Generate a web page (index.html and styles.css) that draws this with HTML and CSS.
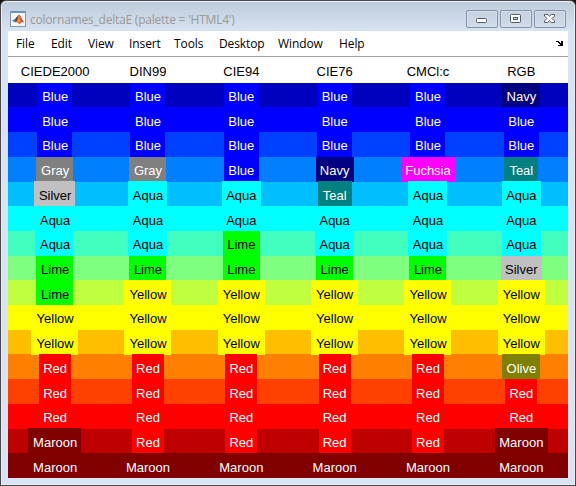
FILE: index.html
```html
<!DOCTYPE html>
<html lang="en">
<head>
<meta charset="utf-8">
<title>colornames_deltaE</title>
<link rel="stylesheet" href="styles.css">
</head>
<body>
<div class="window">
  <header class="titlebar">
    <svg class="app-icon" width="16" height="16" viewBox="0 0 16 16">
      <rect x=".5" y=".5" width="15" height="15" fill="#f4f5f7" stroke="#8295aa"/>
      <rect x="1" y="0" width="14" height="2" fill="#6c93bd"/>
      <path d="M2 9.500 5 8 7 10 5 11.500z" fill="#397fae"/>
      <path d="M5 8 9 3.500 7.500 9.500 6 11z" fill="#653f4c"/>
      <path d="M9 3.500C10.500 4 12 9 14 11.500L12 11 9 13.500 8 11.500 6 11.500C7.500 9 8 6 9 3.500z" fill="#e6602b"/>
      <path d="M9.200 5 9.800 10 8.500 12 7.500 10z" fill="#f6a03b"/>
      <path d="M10 4.500C11 6.500 12 10 14 11.500L12 10.700z" fill="#9d2b20"/>
    </svg>
    <span class="title">colornames_deltaE (palette = 'HTML4')</span>
    <div class="controls">
      <span class="control"><svg width="30" height="16" viewBox="0 0 30 16"><rect x="9.500" y="7.500" width="10" height="4" rx="1" fill="#fff" stroke="#555b6b"/></svg></span>
      <span class="control"><svg width="30" height="16" viewBox="0 0 30 16"><rect x="9.500" y="3.500" width="10" height="8" rx="1" fill="#fff" stroke="#555b6b"/><rect x="12.500" y="6.500" width="4" height="2" fill="#c9d5e4" stroke="#555b6b"/></svg></span>
      <span class="control"><svg width="30" height="16" viewBox="0 0 30 16"><path d="M9.500 3.500H12.800L14.500 5.400 16.200 3.500H19.500V5L17 7.500 19.500 10V11.500H16.200L14.500 9.600 12.800 11.500H9.500V10L12 7.500 9.500 5z" fill="#fff" stroke="#555b6b"/></svg></span>
    </div>
  </header>
  <main class="client">
    <nav class="menu">
      <span>File</span><span>Edit</span><span>View</span><span>Insert</span><span>Tools</span><span>Desktop</span><span>Window</span><span>Help</span>
      <svg class="dock" width="7" height="5" viewBox="0 0 7 5" shape-rendering="crispEdges"><path d="M0 1V0H3V1H4V2H5V0H7V5H2V4H4V3H3V2H2V1z"/></svg>
    </nav>
    <div class="row heads"><span>CIEDE2000</span><span>DIN99</span><span>CIE94</span><span>CIE76</span><span>CMCl:c</span><span>RGB</span></div>
    <section class="chart">
      <div class="row"><b class="blue">Blue</b><b class="blue">Blue</b><b class="blue">Blue</b><b class="blue">Blue</b><b class="blue">Blue</b><b class="navy">Navy</b></div>
      <div class="row"><b class="blue">Blue</b><b class="blue">Blue</b><b class="blue">Blue</b><b class="blue">Blue</b><b class="blue">Blue</b><b class="blue">Blue</b></div>
      <div class="row"><b class="blue">Blue</b><b class="blue">Blue</b><b class="blue">Blue</b><b class="blue">Blue</b><b class="blue">Blue</b><b class="blue">Blue</b></div>
      <div class="row"><b class="gray">Gray</b><b class="gray">Gray</b><b class="blue">Blue</b><b class="navy">Navy</b><b class="fuchsia">Fuchsia</b><b class="teal">Teal</b></div>
      <div class="row"><b class="silver">Silver</b><b class="aqua">Aqua</b><b class="aqua">Aqua</b><b class="teal">Teal</b><b class="aqua">Aqua</b><b class="aqua">Aqua</b></div>
      <div class="row"><b class="aqua">Aqua</b><b class="aqua">Aqua</b><b class="aqua">Aqua</b><b class="aqua">Aqua</b><b class="aqua">Aqua</b><b class="aqua">Aqua</b></div>
      <div class="row"><b class="aqua">Aqua</b><b class="aqua">Aqua</b><b class="lime">Lime</b><b class="aqua">Aqua</b><b class="aqua">Aqua</b><b class="aqua">Aqua</b></div>
      <div class="row"><b class="lime">Lime</b><b class="lime">Lime</b><b class="lime">Lime</b><b class="lime">Lime</b><b class="lime">Lime</b><b class="silver">Silver</b></div>
      <div class="row"><b class="lime">Lime</b><b class="yellow">Yellow</b><b class="yellow">Yellow</b><b class="yellow">Yellow</b><b class="yellow">Yellow</b><b class="yellow">Yellow</b></div>
      <div class="row"><b class="yellow">Yellow</b><b class="yellow">Yellow</b><b class="yellow">Yellow</b><b class="yellow">Yellow</b><b class="yellow">Yellow</b><b class="yellow">Yellow</b></div>
      <div class="row"><b class="yellow">Yellow</b><b class="yellow">Yellow</b><b class="yellow">Yellow</b><b class="yellow">Yellow</b><b class="yellow">Yellow</b><b class="yellow">Yellow</b></div>
      <div class="row"><b class="red">Red</b><b class="red">Red</b><b class="red">Red</b><b class="red">Red</b><b class="red">Red</b><b class="olive">Olive</b></div>
      <div class="row"><b class="red">Red</b><b class="red">Red</b><b class="red">Red</b><b class="red">Red</b><b class="red">Red</b><b class="red">Red</b></div>
      <div class="row"><b class="red">Red</b><b class="red">Red</b><b class="red">Red</b><b class="red">Red</b><b class="red">Red</b><b class="red">Red</b></div>
      <div class="row"><b class="maroon">Maroon</b><b class="red">Red</b><b class="red">Red</b><b class="red">Red</b><b class="red">Red</b><b class="maroon">Maroon</b></div>
      <div class="row"><b class="maroon">Maroon</b><b class="maroon">Maroon</b><b class="maroon">Maroon</b><b class="maroon">Maroon</b><b class="maroon">Maroon</b><b class="maroon">Maroon</b></div>
    </section>
  </main>
</div>
</body>
</html>
```
FILE: styles.css
```css
* { box-sizing: border-box; }
body { margin: 0; background: #15110f; }

.window {
  width: 576px;
  height: 486px;
  padding: 0 7px;
  border: 1px solid #4b484d;
  border-radius: 6px 6px 0 0;
  background: linear-gradient(#bdcad9, #d8e4f1 31px);
  box-shadow: inset 0 0 0 1px #e6edf5;
}

.titlebar {
  display: flex;
  height: 30px;
  padding-left: 2px;
  font: 12px/16px "Open Sans", sans-serif;
  color: #999;
}
.app-icon { margin-top: 10px; }
.title { margin: 11px 0 0 4px; white-space: nowrap; letter-spacing: -0.220px; }
.controls { display: flex; gap: 2px; margin: 9px 2px 0 auto; }
.control {
  width: 32px;
  height: 18px;
  border: 1px solid #8391ad;
  border-radius: 2px;
  background: linear-gradient(#c5d1df, #d0dce9);
  box-shadow: inset 0 0 0 1px #d5deea;
}
.control svg { display: block; }

.client { background: #fff; }
.menu {
  display: grid;
  grid-template-columns: 35px 37px 41px 45px 45px 59px 61px 1fr 7px;
  height: 26px;
  padding: 4px 5px 0 8px;
  border-bottom: 1px solid #a0a0a0;
  font: 12px/18px "Open Sans", sans-serif;
  letter-spacing: -0.100px;
}
.dock { margin-top: 6px; }

.row {
  display: grid;
  grid-template-columns: repeat(6, 1fr);
  justify-items: center;
  height: 25px;
  font: 13px/28px "Liberation Sans", Arial, sans-serif;
}
.heads { height: 26px; line-height: 29px; }
.row b { height: 25px; font-weight: 400; text-align: center; }
.row > :first-child { padding-left: 1px; }

.chart .row:nth-child(1) { background: #0000bf; height: 24px; }
.chart .row:nth-child(2) { background: #0000ff; }
.chart .row:nth-child(3) { background: #0040ff; }
.chart .row:nth-child(4) { background: #0080ff; }
.chart .row:nth-child(5) { background: #00bfff; height: 24px; }
.chart .row:nth-child(6) { background: #00ffff; }
.chart .row:nth-child(7) { background: #40ffbf; }
.chart .row:nth-child(8) { background: #80ff80; height: 24px; }
.chart .row:nth-child(9) { background: #bfff40; }
.chart .row:nth-child(10) { background: #ffff00; }
.chart .row:nth-child(11) { background: #ffbf00; height: 24px; }
.chart .row:nth-child(12) { background: #ff8000; }
.chart .row:nth-child(13) { background: #ff4000; }
.chart .row:nth-child(14) { background: #ff0000; }
.chart .row:nth-child(15) { background: #bf0000; height: 24px; }
.chart .row:nth-child(16) { background: #800000; }

/* Labels that start one pixel above their band */
.row:nth-child(5) b,
.row:nth-child(15) b { margin-top: -1px; }

/* Bands whose text sits one pixel lower */
.row:nth-child(2) b,
.row:nth-child(5) b,
.row:nth-child(6) b,
.row:nth-child(9) b,
.row:nth-child(12) b,
.row:nth-child(13) b,
.row:nth-child(15) b,
.row:nth-child(16) b { line-height: 30px; }

.row .blue { width: 35px; background: #00f; color: #fff; }
.row .navy { width: 38px; background: #000080; color: #fff; }
.row .gray { width: 37px; background: #808080; color: #fff; }
.row .silver { width: 41px; background: #c0c0c0; }
.row .fuchsia { width: 54px; background: #f0f; color: #fff; }
.row .teal { width: 34px; background: #008080; color: #fff; }
.row .aqua { width: 39px; background: #0ff; }
.row .lime { width: 37px; background: #0f0; }
.row .yellow { width: 47px; background: #ff0; }
.row .red { width: 32px; background: #f00; color: #fff; }
.row .olive { width: 38px; background: #808000; color: #fff; }
.row .maroon { width: 53px; background: #800000; color: #fff; }
```
